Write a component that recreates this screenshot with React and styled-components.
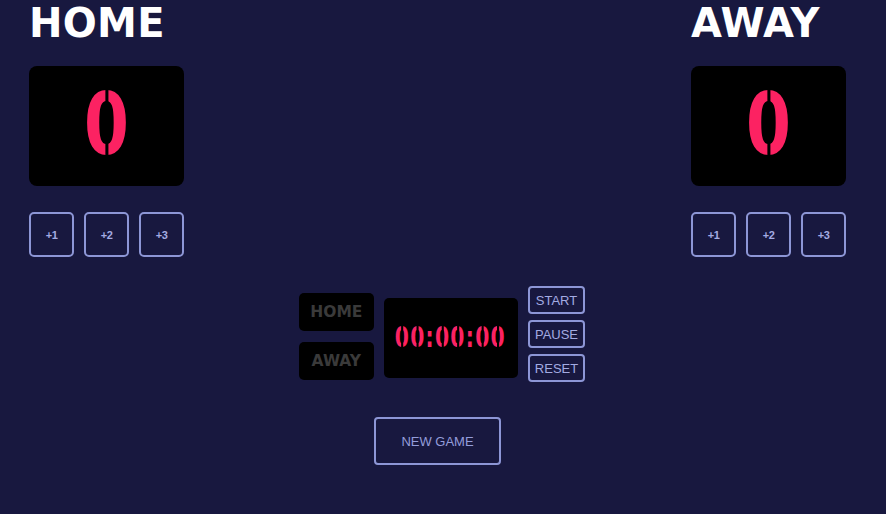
import React from 'react';
import styled, { createGlobalStyle } from 'styled-components';

const GlobalStyle = createGlobalStyle`
  html, body {
    margin: 0;
    padding: 0;
    background: #18183f;
  }
  body {
    font-family: "Liberation Sans", Arial, sans-serif;
  }
`;

const Page = styled.div`
  display: flex;
  flex-direction: column;
  min-height: 514px;
  padding: 0 40px 0 29px;
  box-sizing: border-box;
`;

const TopRow = styled.div`
  display: flex;
  justify-content: space-between;
`;

const Team = styled.section`
  display: flex;
  flex-direction: column;
  width: 155px;
`;

const TeamName = styled.h2`
  margin: 0;
  font-family: "DejaVu Sans", Verdana, sans-serif;
  font-weight: 700;
  font-size: 40px;
  line-height: 47px;
  letter-spacing: 0.3px;
  color: #ffffff;
`;

const ScoreBox = styled.div`
  margin-top: 19px;
  height: 120px;
  background: #000;
  border-radius: 8px;
  display: flex;
  align-items: center;
  justify-content: center;
`;

const Digit = styled.span`
  position: relative;
  display: inline-block;
  &::after {
    content: '';
    position: absolute;
    left: 50%;
    top: 0;
    bottom: 0;
    width: ${p => p.$cut}px;
    margin-left: -${p => p.$cut / 2}px;
    background: #000;
  }
`;

const ScoreText = styled.span`
  display: inline-block;
  font-family: "DejaVu Sans", Verdana, sans-serif;
  font-weight: 700;
  font-size: 85px;
  line-height: 1;
  color: #fc2262;
  transform: scaleX(0.76);
  margin-top: -4px;
`;

const ButtonRow = styled.div`
  margin-top: 26px;
  display: flex;
  gap: 10px;
`;

const OutlineButton = styled.button`
  box-sizing: border-box;
  background: transparent;
  border: 2px solid #8d96d6;
  border-radius: 5px;
  color: #a3abe2;
  font-family: "Liberation Sans", Arial, sans-serif;
  cursor: pointer;
  padding: 0;
`;

const ScoreButton = styled(OutlineButton)`
  width: 45px;
  height: 45px;
  font-size: 11px;
  font-weight: 700;
  letter-spacing: -0.5px;
`;

const CenterRow = styled.div`
  margin-top: 29px;
  padding-left: 9px;
  display: flex;
  justify-content: center;
  align-items: center;
  gap: 10px;
`;

const Labels = styled.div`
  display: flex;
  flex-direction: column;
  gap: 11px;
  margin-top: 5px;
`;

const LabelBox = styled.div`
  width: 75px;
  height: 38px;
  background: #000;
  border-radius: 5px;
  display: flex;
  align-items: center;
  justify-content: center;
  font-family: "DejaVu Sans", Verdana, sans-serif;
  font-weight: 700;
  font-size: 15.5px;
  color: #3a3a3a;
`;

const TimerBox = styled.div`
  width: 134px;
  height: 80px;
  margin-top: 7px;
  background: #000;
  border-radius: 5px;
  display: flex;
  align-items: center;
  justify-content: center;
`;

const TimerText = styled.span`
  display: inline-block;
  white-space: nowrap;
  font-family: "DejaVu Sans", Verdana, sans-serif;
  font-weight: 700;
  font-size: 29px;
  line-height: 1;
  letter-spacing: 1.8px;
  color: #fc2262;
  transform: scaleX(0.7);
`;

const Controls = styled.div`
  display: flex;
  flex-direction: column;
  gap: 6px;
`;

const ControlButton = styled(OutlineButton)`
  height: 28px;
  padding: 0 5px;
  border-radius: 4px;
  font-size: 13px;
`;

const NewGameButton = styled(OutlineButton)`
  align-self: center;
  margin-top: 35px;
  width: 127px;
  height: 48px;
  border-radius: 4px;
  font-size: 13px;
  color: #949ddb;
`;

const Score = ({ value }) => (
  <ScoreBox>
    <ScoreText>
      {String(value).split('').map((c, i) => (
        <Digit key={i} $cut={4}>{c}</Digit>
      ))}
    </ScoreText>
  </ScoreBox>
);

const Timer = ({ text }) => (
  <TimerBox>
    <TimerText>
      {text.split('').map((c, i) =>
        c === ':' ? <span key={i}>{c}</span> : <Digit key={i} $cut={3}>{c}</Digit>
      )}
    </TimerText>
  </TimerBox>
);

const TeamPanel = ({ name, score }) => (
  <Team>
    <TeamName>{name}</TeamName>
    <Score value={score} />
    <ButtonRow>
      <ScoreButton>+1</ScoreButton>
      <ScoreButton>+2</ScoreButton>
      <ScoreButton>+3</ScoreButton>
    </ButtonRow>
  </Team>
);

export default function App() {
  return (
    <>
      <GlobalStyle />
      <Page>
        <TopRow>
          <TeamPanel name="HOME" score={0} />
          <TeamPanel name="AWAY" score={0} />
        </TopRow>
        <CenterRow>
          <Labels>
            <LabelBox>HOME</LabelBox>
            <LabelBox>AWAY</LabelBox>
          </Labels>
          <Timer text="00:00:00" />
          <Controls>
            <ControlButton>START</ControlButton>
            <ControlButton>PAUSE</ControlButton>
            <ControlButton>RESET</ControlButton>
          </Controls>
        </CenterRow>
        <NewGameButton>NEW GAME</NewGameButton>
      </Page>
    </>
  );
}
